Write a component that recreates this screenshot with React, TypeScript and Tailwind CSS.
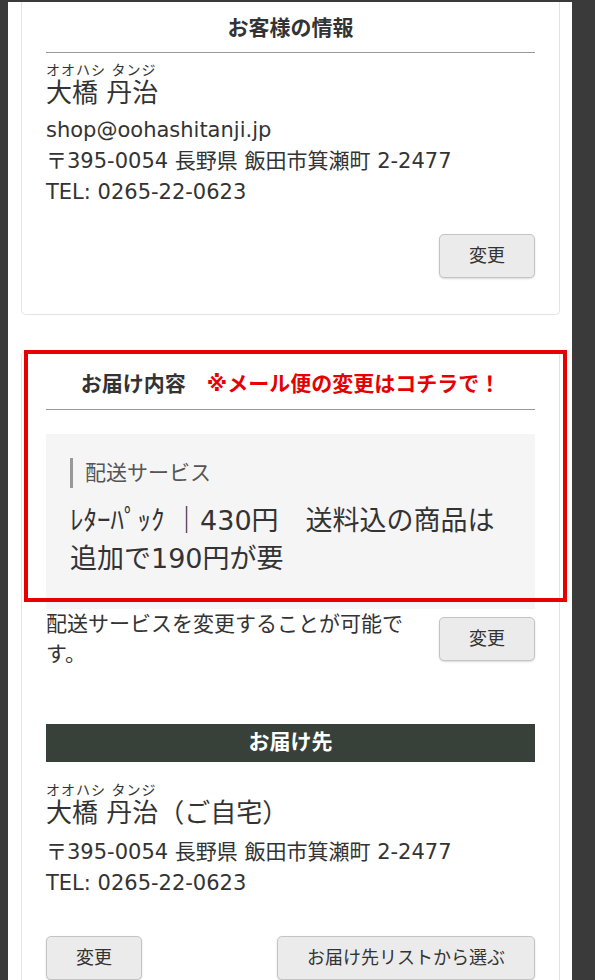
import React from "react";

const font = "font-['DejaVu_Sans','Noto_Sans_CJK_JP',sans-serif]";

function Btn({ children, className = "" }: { children: React.ReactNode; className?: string }) {
  return (
    <button
      className={`h-[44px] rounded-[5px] border border-[#c4c4c4] bg-[#ebebeb] text-[18px] leading-none text-[#333] shadow-[0_1px_2px_rgba(0,0,0,0.15)] ${className}`}
    >
      {children}
    </button>
  );
}

export default function App() {
  return (
    <div className={`relative min-h-[980px] bg-[#3a3a3a] pt-[2px] text-[#333] ${font}`}>
      <div className="ml-[8px] w-[564px] bg-white pl-[13px] pr-[12px] pb-[40px]">
        {/* Card 1 */}
        <div className="rounded-b-[5px] border border-t-0 border-[#e3e3e3] px-[24px] pb-[36px]">
          <div className="border-b border-[#999] pt-[11px] pb-[9px] text-center text-[21px] font-bold leading-[30px]">
            お客様の情報
          </div>
          <div className="mt-[9px] text-[14px] leading-[16px] tracking-[1px]">オオハシ タンジ</div>
          <div className="text-[26px] leading-[30px]">大橋 丹治</div>
          <div className="mt-[7px] text-[21px] leading-[31px]">
            <div>shop@oohashitanji.jp</div>
            <div>〒395-0054 長野県 飯田市箕瀬町 2-2477</div>
            <div>TEL: 0265-22-0623</div>
          </div>
          <div className="mt-[26px] flex justify-end">
            <Btn className="w-[96px]">変更</Btn>
          </div>
        </div>

        {/* Card 2 */}
        <div className="mt-[36px] rounded-t-[5px] border border-b-0 border-[#e3e3e3] px-[24px] pb-[20px]">
          <div className="border-b border-[#999] pt-[17px] pb-[10px] text-center text-[21px] font-bold leading-[30px]">
            お届け内容　<span className="text-[#e60000]">※メール便の変更はコチラで！</span>
          </div>
          <div className="mt-[24px] bg-[#f5f5f5] px-[24px] pt-[24px] pb-[31px]">
            <div className="border-l-[3px] border-[#999] pl-[12px] text-[21px] leading-[30px] text-[#555]">
              配送サービス
            </div>
            <div className="mt-[14px] text-[27px] leading-[38px] text-[#333]">
              ﾚﾀｰﾊﾟｯｸ ｜430円　送料込の商品は追加で190円が要
            </div>
          </div>
          <div className="flex items-center gap-[32px]">
            <div className="flex-1 text-[21px] leading-[30px]">配送サービスを変更することが可能です。</div>
            <Btn className="w-[96px] shrink-0">変更</Btn>
          </div>

          <div className="mt-[55px] flex h-[38px] items-center justify-center bg-[#37413a] text-[21px] font-bold text-white">
            お届け先
          </div>
          <div className="mt-[20px] text-[14px] leading-[16px] tracking-[1px]">オオハシ タンジ</div>
          <div className="text-[26px] leading-[30px]">大橋 丹治（ご自宅）</div>
          <div className="mt-[9px] text-[21px] leading-[31px]">
            <div>〒395-0054 長野県 飯田市箕瀬町 2-2477</div>
            <div>TEL: 0265-22-0623</div>
          </div>
          <div className="mt-[37px] flex justify-between">
            <Btn className="w-[96px]">変更</Btn>
            <Btn className="w-[258px]">お届け先リストから選ぶ</Btn>
          </div>
        </div>
      </div>

      {/* red annotation frame */}
      <div className="pointer-events-none absolute left-[24px] top-[350px] h-[252px] w-[543px] border-[4px] border-[#e60000]" />
    </div>
  );
}
